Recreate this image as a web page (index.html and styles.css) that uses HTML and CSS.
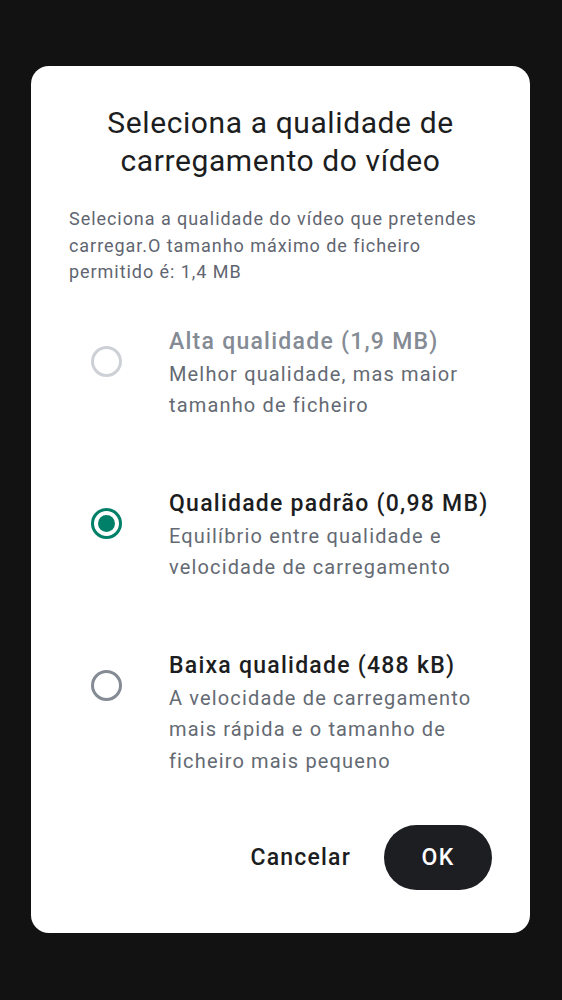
FILE: index.html
```html
<!DOCTYPE html>
<html lang="pt">
<head>
<meta charset="utf-8">
<link rel="stylesheet" href="styles.css">
</head>
<body>
<div class="screen">
  <div class="dialog">
    <h1 class="title">Seleciona a qualidade de carregamento do vídeo</h1>
    <p class="desc">Seleciona a qualidade do vídeo que pretendes carregar.O tamanho máximo de ficheiro permitido é: 1,4 MB</p>
    <div class="options">
      <div class="option disabled">
        <span class="radio"></span>
        <div class="text">
          <div class="opt-title">Alta qualidade (1,9 MB)</div>
          <div class="opt-sub">Melhor qualidade, mas maior tamanho de ficheiro</div>
        </div>
      </div>
      <div class="option selected">
        <span class="radio"><span class="dot"></span></span>
        <div class="text">
          <div class="opt-title">Qualidade padrão (0,98 MB)</div>
          <div class="opt-sub">Equilíbrio entre qualidade e velocidade de carregamento</div>
        </div>
      </div>
      <div class="option">
        <span class="radio"></span>
        <div class="text">
          <div class="opt-title">Baixa qualidade (488 kB)</div>
          <div class="opt-sub">A velocidade de carregamento mais rápida e o tamanho de ficheiro mais pequeno</div>
        </div>
      </div>
    </div>
    <div class="actions">
      <button class="btn-text">Cancelar</button>
      <button class="btn-ok">OK</button>
    </div>
  </div>
</div>
</body>
</html>
```

FILE: styles.css
```css
html, body {
  margin: 0;
  padding: 0;
  background: #121212;
}
body {
  font-family: Roboto, "Noto Sans", sans-serif;
  width: 562px;
  height: 1000px;
  overflow: hidden;
}
.screen {
  padding: 66px 32px 0 31px;
}
.dialog {
  background: #ffffff;
  border-radius: 18px;
  height: 867px;
  box-sizing: border-box;
  padding: 38px 38px 43px 38px;
  display: flex;
  flex-direction: column;
}
.title {
  margin: 0;
  font-size: 30px;
  line-height: 38px;
  font-weight: 400;
  color: #1c1d21;
  text-align: center;
  letter-spacing: 0.6px;
  padding: 0 10px;
}
.desc {
  margin: 26px 0 0 0;
  font-size: 18px;
  line-height: 26.5px;
  color: #5f6570;
  letter-spacing: 0.95px;
}
.options {
  margin-top: 38px;
  display: flex;
  flex-direction: column;
  gap: 64px;
}
.option {
  display: flex;
  align-items: flex-start;
  padding-left: 22px;
}
.radio {
  flex: none;
  width: 31px;
  height: 31px;
  box-sizing: border-box;
  border: 3px solid #858b94;
  border-radius: 50%;
  margin-top: 22px;
  margin-right: 47px;
  display: flex;
  align-items: center;
  justify-content: center;
}
.disabled .radio {
  border-color: #cdd1d6;
}
.selected .radio {
  border-color: #008069;
}
.dot {
  width: 17px;
  height: 17px;
  border-radius: 50%;
  background: #008069;
}
.opt-title {
  font-size: 23px;
  line-height: 35px;
  font-weight: 500;
  color: #1c1d21;
  letter-spacing: 1.25px;
}
.disabled .opt-title {
  color: #858b94;
}
.opt-sub {
  font-size: 20px;
  line-height: 31.5px;
  color: #646a73;
  letter-spacing: 1.15px;
}
.actions {
  margin-top: auto;
  display: flex;
  justify-content: flex-end;
  align-items: center;
  gap: 33px;
}
.btn-text {
  border: none;
  background: none;
  padding: 0;
  font-family: Roboto, sans-serif;
  font-size: 23px;
  font-weight: 500;
  letter-spacing: 1.2px;
  color: #1c1d21;
}
.btn-ok {
  border: none;
  background: #1d1e22;
  color: #ffffff;
  font-family: Roboto, sans-serif;
  font-size: 23px;
  font-weight: 500;
  letter-spacing: 1.2px;
  width: 108px;
  height: 65px;
  border-radius: 33px;
}
```
